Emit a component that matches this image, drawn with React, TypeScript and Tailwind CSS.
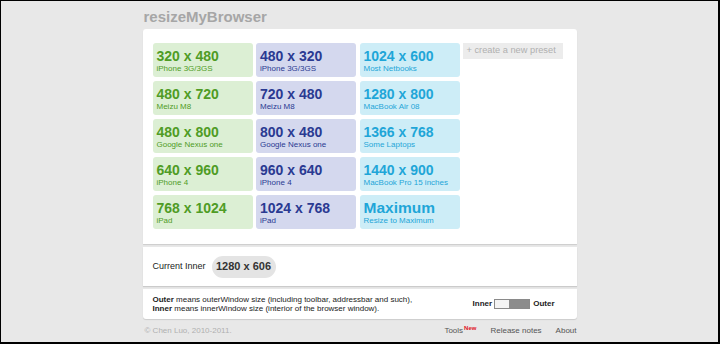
const presets = [
  { size: "320 x 480", name: "iPhone 3G/3GS", tone: "green" },
  { size: "480 x 320", name: "iPhone 3G/3GS", tone: "blue" },
  { size: "1024 x 600", name: "Most Netbooks", tone: "cyan" },
  { size: "480 x 720", name: "Meizu M8", tone: "green" },
  { size: "720 x 480", name: "Meizu M8", tone: "blue" },
  { size: "1280 x 800", name: "MacBook Air 08", tone: "cyan" },
  { size: "480 x 800", name: "Google Nexus one", tone: "green" },
  { size: "800 x 480", name: "Google Nexus one", tone: "blue" },
  { size: "1366 x 768", name: "Some Laptops", tone: "cyan" },
  { size: "640 x 960", name: "iPhone 4", tone: "green" },
  { size: "960 x 640", name: "iPhone 4", tone: "blue" },
  { size: "1440 x 900", name: "MacBook Pro 15 inches", tone: "cyan" },
  { size: "768 x 1024", name: "iPad", tone: "green" },
  { size: "1024 x 768", name: "iPad", tone: "blue" },
  { size: "Maximum", name: "Resize to Maximum", tone: "cyan" },
];

const tones: Record<string, string> = {
  green: "bg-[#dcefd4] text-[#4f9c25]",
  blue: "bg-[#d4d8ee] text-[#2a3a92]",
  cyan: "bg-[#cdedf7] text-[#1fa6d8]",
};

function Preset({ size, name, tone }: { size: string; name: string; tone: string }) {
  const big = size === "Maximum";
  return (
    <div className={`h-[34px] w-[100px] rounded-[3px] pl-[4px] pt-[5px] ${tones[tone]}`}>
      <div className={big ? "text-[15.5px] font-bold leading-[16px]" : "text-[14px] font-bold leading-[16px]"}>
        {size}
      </div>
      <div className="text-[8px] leading-[10px]">{name}</div>
    </div>
  );
}

export default function App() {
  return (
    <div
      className="h-[344px] w-[720px] overflow-hidden border-t border-l border-r-2 border-b-2 border-black bg-[#e8e8e8]"
      style={{ fontFamily: '"Liberation Sans", Arial, sans-serif' }}
    >
      <div className="mx-auto w-[434px]">

        <h1 className="pl-[1px] pt-[7px] text-[15px] font-bold leading-[18px] text-[#a6a6a6]">
          resizeMyBrowser
        </h1>

        <div className="mt-[3px] flex flex-col gap-[3px]">

          <div className="flex h-[215px] rounded-t-[3px] bg-white pl-[10px] pt-[14px] shadow-[0_1px_1px_rgba(0,0,0,0.12)]">
            <div className="grid grid-cols-[100px_100px_100px] gap-x-[3.5px] gap-y-[4px] self-start">
              {presets.map((p) => (
                <Preset key={p.size} {...p} />
              ))}
            </div>
            <div className="ml-[3px] flex h-[16px] w-[100px] items-center bg-[#ececec] pl-[4px] text-[9.25px] text-[#b0b0b0]">
              + create a new preset
            </div>
          </div>

          <div className="flex h-[39px] items-center bg-white pl-[10px] shadow-[0_1px_1px_rgba(0,0,0,0.12)]">
            <span className="text-[9px] text-[#222]">Current Inner</span>
            <span className="ml-[6px] flex h-[22px] w-[64px] items-center justify-center rounded-full bg-[#e4e4e4] text-[11px] font-bold text-[#333]">
              1280 x 606
            </span>
          </div>

          <div className="flex h-[30px] items-center justify-between rounded-b-[3px] bg-white pl-[10px] pr-[22px] shadow-[0_1px_1px_rgba(0,0,0,0.12)]">
            <div className="text-[8px] leading-[9.5px] text-[#222]">
              <div>
                <b>Outer</b> means outerWindow size (including toolbar, addressbar and such),
              </div>
              <div>
                <b>Inner</b> means innerWindow size (interior of the browser window).
              </div>
            </div>
            <div className="flex items-center text-[8px] font-bold text-[#222]">
              <span>Inner</span>
              <div className="ml-[2px] flex h-[10px] w-[36px] border border-[#8a8a8a]">
                <div className="w-[14px] bg-[#f4f4f4]" />
                <div className="flex-1 bg-[#8c8c8c]" />
              </div>
              <span className="ml-[3px]">Outer</span>
            </div>
          </div>

        </div>

        <div className="flex h-[24px] items-center justify-between pl-[2px] text-[8px] text-[#555]">
          <span className="text-[#b0b0b0]">© Chen Luo, 2010-2011.</span>
          <div className="flex items-center">
            <span>
              Tools
              <sup className="ml-[1px] text-[6px] font-bold text-[#e0141e]">New</sup>
            </span>
            <span className="ml-[14px]">Release notes</span>
            <span className="ml-[14px]">About</span>
          </div>
        </div>

      </div>
    </div>
  );
}
